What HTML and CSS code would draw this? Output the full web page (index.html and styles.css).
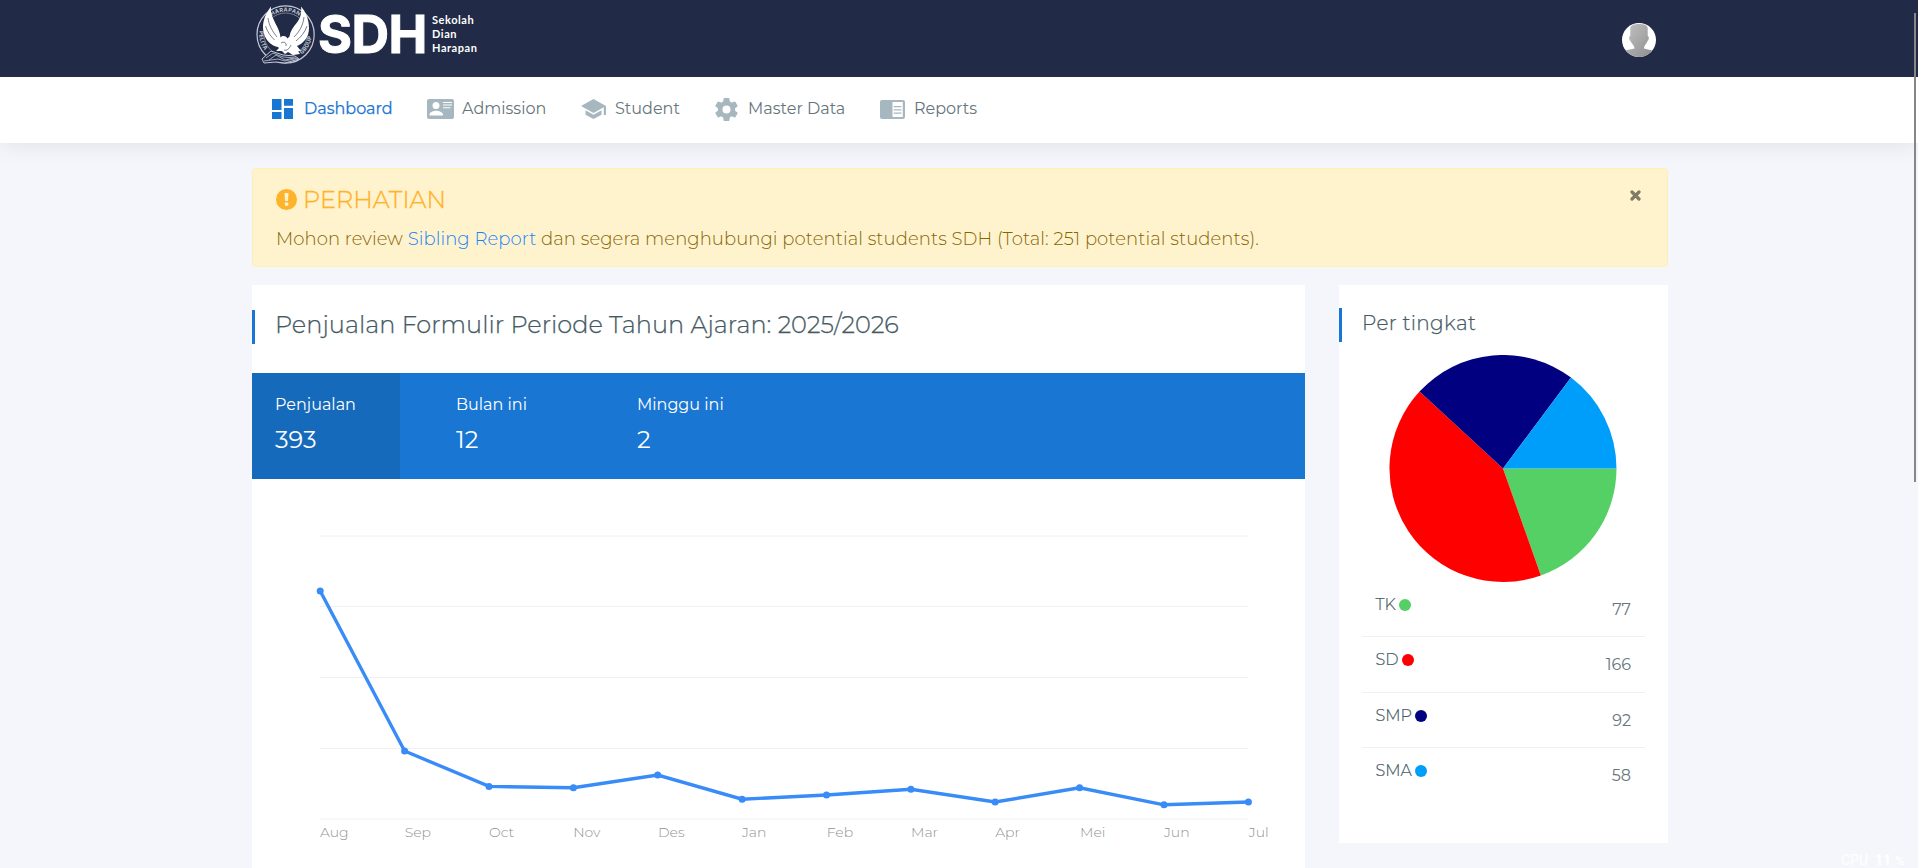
FILE: index.html
```html
<!DOCTYPE html>
<html lang="id">
<head>
<meta charset="utf-8">
<title>SDH Dashboard</title>
<link rel="stylesheet" href="styles.css">
</head>
<body>
<header class="topbar">
  <div class="container topbar-inner">
    <div class="logo">
      <svg class="emblem" width="60" height="62" viewBox="0 0 60 62">
        <circle cx="29.600" cy="30.500" r="28.600" fill="none" stroke="#c6cad6" stroke-width="1.200"/>
        <circle cx="29.600" cy="30.500" r="21.500" fill="none" stroke="#8d94a8" stroke-width=".8"/>
        <path id="arcTop" d="M6.600 30.500a23 23 0 0 1 46 0" fill="none"/>
        <path id="arcLeft" d="M3.500 27a26 26 0 0 0 15 27" fill="none"/>
        <path id="arcRight" d="M46 50.500a26 26 0 0 0 9-25" fill="none"/>
        <text class="ring-text"><textPath href="#arcTop" startOffset="50%" text-anchor="middle">HARAPAN</textPath></text>
        <text class="ring-text"><textPath href="#arcLeft">PELITA</textPath></text>
        <text class="ring-text"><textPath href="#arcRight">GROUP</textPath></text>
        <path fill="#fff" d="M15 2.500C10 9 7 16 7 23c0 8 4 14 8 17 3 2.500 7 2.500 8 4l-3 3h6l3 3 3-2 5 3 7-1-2-3 3 0-4-5c7-3 12-9 12-18 0-8-3-16-8-21.500 1 7-1 12-4 16-4 5-7 9-7.500 14l-2 2c-2-3-5-3-7-1-.5-5-2-8-4-12C18 16 14 10 15 2.500Z"/>
        <path fill="none" stroke="#212a47" stroke-width=".6" d="M12 14c1 8 5 14 9 19M9.500 22c2 6 5 10 9 14M48 13c-1 9-5 15-10 20M51 22c-2 6-6 11-11 15M25 39c3-2 6 0 5 3M28 46c3 1 5-1 7-5"/>
        <path fill="#212a47" stroke="#c6cad6" stroke-width="1" d="M6 55l9-8 12 4 12 1 4 3-14 4-9-1-12 1Z"/>
        <path fill="none" stroke="#aeb4c4" stroke-width=".9" d="M10 54l7-5 10 4 13 1M13 56l7-5 9 5 9-2M8 57l14-2 7 2 13-3"/>
      </svg>
      <span class="logo-name">SDH</span>
      <span class="logo-sub">Sekolah<br>Dian<br>Harapan</span>
    </div>
    <svg class="avatar" width="34" height="34" viewBox="0 0 34 34">
      <defs>
        <clipPath id="round"><circle cx="17" cy="17" r="17"/></clipPath>
        <linearGradient id="grey" x1="0" y1="0" x2="1" y2="1"><stop offset="0" stop-color="#c2c2c2"/><stop offset="1" stop-color="#8e8e8e"/></linearGradient>
      </defs>
      <g clip-path="url(#round)">
        <rect width="34" height="34" fill="#fff"/>
        <path fill="url(#grey)" d="M8.300 5C9 1.500 13 1 17 1s8 .5 8.700 4v8c1.500 0 1.500 4-.2 5-.8 3-3.500 4-3.500 7.500l8 2V35H3v-7.500l9.500-2c0-3-3-5-4-7.500-1.800-1-1.700-5-.2-5Z"/>
      </g>
    </svg>
  </div>
</header>

<nav class="nav">
  <div class="container nav-inner">
    <a class="nav-item active w-dashboard"><svg width="21" height="20" viewBox="0 0 21 20"><path d="M0 0h9.500v11H0zM0 13h9.500v7H0zM12 0h9v6.700h-9zM12 9h9v11h-9z"/></svg><span>Dashboard</span></a>
    <a class="nav-item w-admission"><svg width="27" height="20" viewBox="0 0 27 20"><path fill-rule="evenodd" d="M2 0h23a2 2 0 0 1 2 2v16a2 2 0 0 1-2 2H2a2 2 0 0 1-2-2V2a2 2 0 0 1 2-2Zm7 3a3.500 3.500 0 1 0 0 7 3.500 3.500 0 0 0 0-7ZM2.500 16.500h13.500v-1c0-2.500-4.500-3.800-6.800-3.800s-6.700 1.300-6.700 3.800ZM16 3v1h9V3Zm0 2.600v1h9v-1Zm0 2.600v1h7.500v-1Z"/></svg><span>Admission</span></a>
    <a class="nav-item w-student"><svg width="25" height="20" viewBox="0 0 25 20"><path d="M12.500 0 0 7l12.500 7 10.300-5.700V16H25V7ZM4.500 11.300v4.400l8 4.300 8-4.300v-4.400l-8 4.500Z"/></svg><span>Student</span></a>
    <a class="nav-item w-master"><svg width="23" height="23" viewBox="2.200 2 19.600 20"><path d="M19.430 12.980c.04-.32.070-.64.070-.98s-.03-.66-.07-.98l2.110-1.650c.19-.15.240-.42.120-.64l-2-3.460c-.12-.22-.39-.3-.61-.22l-2.490 1c-.52-.4-1.080-.73-1.690-.98l-.38-2.650C14.460 2.180 14.250 2 14 2h-4c-.25 0-.46.180-.49.420l-.38 2.650c-.61.250-1.170.590-1.690.98l-2.490-1c-.23-.09-.49 0-.61.220l-2 3.460c-.13.220-.07.490.120.640l2.110 1.650c-.04.320-.07.650-.07.980s.03.660.070.980l-2.110 1.650c-.19.150-.24.420-.12.640l2 3.460c.12.220.390.300.610.220l2.490-1c.52.400 1.080.730 1.690.980l.38 2.650c.03.240.240.420.490.420h4c.25 0 .46-.18.490-.42l.38-2.650c.61-.25 1.170-.59 1.690-.98l2.490 1c.23.090.490 0 .61-.22l2-3.460c.12-.22.070-.49-.12-.64ZM12 15.500a3.500 3.500 0 1 1 0-7 3.500 3.500 0 0 1 0 7Z"/></svg><span>Master Data</span></a>
    <a class="nav-item w-reports"><svg class="drop" width="25" height="19" viewBox="0 0 25 19"><path fill-rule="evenodd" d="M2 0h21a2 2 0 0 1 2 2v15a2 2 0 0 1-2 2H2a2 2 0 0 1-2-2V2a2 2 0 0 1 2-2Zm10.500 2v15h10.300V2Z"/><path d="M13.700 6h7.700v1.300h-7.700zM13.700 9.200h7.700v1.300h-7.700zM13.700 12.400h7.700v1.300h-7.700z"/></svg><span>Reports</span></a>
  </div>
</nav>

<main class="container">
  <section class="alert">
    <div class="alert-body">
      <h4 class="alert-title"><svg width="21" height="21" viewBox="0 0 21 21"><circle cx="10.500" cy="10.500" r="10.500" fill="#ffb22b"/><path fill="#fff3cd" d="M8.500 4h4l-.5 8H9zM8.900 13.600h3.400v3.100H8.900z"/></svg><span>PERHATIAN</span></h4>
      <p class="alert-text">Mohon review <a class="link">Sibling Report</a> dan segera menghubungi potential students SDH (Total: 251 potential students).</p>
    </div>
    <svg class="close" width="11" height="11" viewBox="0 0 11 11"><path d="M2 2l7 7M9 2L2 9" stroke="#827a65" stroke-width="3.200" stroke-linecap="round"/></svg>
  </section>

  <div class="cards">
    <section class="card sales">
      <h3 class="card-title sales-title"><span>Penjualan Formulir Periode Tahun Ajaran: 2025/2026</span></h3>
      <div class="stats">
        <div class="stat current"><span class="stat-label">Penjualan</span><span class="stat-value">393</span></div>
        <div class="stat"><span class="stat-label">Bulan ini</span><span class="stat-value">12</span></div>
        <div class="stat"><span class="stat-label">Minggu ini</span><span class="stat-value">2</span></div>
      </div>
      <svg class="chart" width="1053" height="389" viewBox="252 479 1053 389">
        <g class="grid">
          <path d="M320 536h928.500M320 606.500h928.500M320 677.500h928.500M320 748.500h928.500M320 819h928.500"/>
        </g>
        <polyline class="series" points="320.2,591 404.6,751 489,786.400 573.400,787.800 657.700,775 742.100,799.200 826.500,795 910.900,789.300 995.200,802 1079.600,787.800 1164,804.800 1248.400,802"/>
        <g class="dots">
          <circle cx="320.200" cy="591" r="3.500"/><circle cx="404.600" cy="751" r="3.500"/><circle cx="489" cy="786.400" r="3.500"/><circle cx="573.400" cy="787.800" r="3.500"/><circle cx="657.700" cy="775" r="3.500"/><circle cx="742.100" cy="799.200" r="3.500"/><circle cx="826.500" cy="795" r="3.500"/><circle cx="910.900" cy="789.300" r="3.500"/><circle cx="995.200" cy="802" r="3.500"/><circle cx="1079.600" cy="787.800" r="3.500"/><circle cx="1164" cy="804.800" r="3.500"/><circle cx="1248.400" cy="802" r="3.500"/>
        </g>
        <g class="months">
          <text x="320" y="837">Aug</text><text x="404.700" y="837">Sep</text><text x="489" y="837">Oct</text><text x="573.200" y="837">Nov</text><text x="658" y="837">Des</text><text x="742" y="837">Jan</text><text x="826.800" y="837">Feb</text><text x="911" y="837">Mar</text><text x="995.200" y="837">Apr</text><text x="1080" y="837">Mei</text><text x="1164" y="837">Jun</text><text x="1248.800" y="837">Jul</text>
        </g>
      </svg>
    </section>

    <section class="card levels">
      <h4 class="card-title levels-title"><span>Per tingkat</span></h4>
      <svg class="pie" width="228" height="228" viewBox="-114 -113.500 228 228">
        <path fill="#55d064" d="M0 0L113.500 0A113.500 113.500 0 0 1 37.850 107Z"/>
        <path fill="#f00" d="M0 0L37.850 107A113.500 113.500 0 0 1 -83.500 -76.900Z"/>
        <path fill="#000080" d="M0 0L-83.500 -76.900A113.500 113.500 0 0 1 68 -90.900Z"/>
        <path fill="#009efb" d="M0 0L68 -90.900A113.500 113.500 0 0 1 113.500 0Z"/>
      </svg>
      <ul class="level-list">
        <li><span class="level-name">TK<i class="dot green"></i></span><span class="level-count">77</span></li>
        <li><span class="level-name">SD<i class="dot red"></i></span><span class="level-count">166</span></li>
        <li><span class="level-name">SMP<i class="dot navy"></i></span><span class="level-count">92</span></li>
        <li><span class="level-name">SMA<i class="dot blue"></i></span><span class="level-count">58</span></li>
      </ul>
    </section>
  </div>
</main>
<div class="scroll-thumb"></div>
<div class="cpu"><span>CPU</span><b>11</b><b class="pct">%</b></div>
</body>
</html>
```
FILE: styles.css
```css
* { box-sizing: border-box; }
html, body { height: 868px; overflow: hidden; }
body {
  margin: 0;
  background: #f4f6fb;
  font-family: Montserrat, Inter, "Open Sans", sans-serif;
  font-weight: 300;
  font-size: 16px;
  color: #67757c;
}
.container { width: 1416px; margin: 0 auto; position: relative; left: 1px; }
h3, h4, p, ul { margin: 0; padding: 0; font-weight: 300; }

.topbar { height: 77px; background: #212a47; }
.topbar-inner { display: flex; justify-content: space-between; align-items: flex-start; }
.logo { display: flex; align-items: flex-start; padding: 4px 0 0 4px; color: #fff; }
.emblem { flex: none; }
.ring-text { font: 700 5.500px Inter, sans-serif; fill: #c6cad6; letter-spacing: .3px; }
.logo-name { font-family: Inter, sans-serif; font-weight: 700; font-size: 52px; line-height: 62px; margin-left: 2px; width: 114px; letter-spacing: -.5px; -webkit-text-stroke: 1px #fff; }
.logo-sub { font-family: Lato, sans-serif; font-weight: 700; font-size: 11px; line-height: 14px; letter-spacing: .55px; margin: 9px 0 0 0; }
.avatar { margin: 23px 12px 0 0; }

.nav { height: 66px; background: #fff; box-shadow: 0 0 24px rgba(0, 0, 0, .1); clip-path: inset(0 0 -40px 0); }
.nav-inner { display: flex; padding: 20px 0 0 20px; }
.nav-item { display: flex; align-items: center; height: 24px; line-height: 22px; font-weight: 400; }
.nav-item span { margin-top: -1px; }
.nav-item svg { fill: #a6b7bf; flex: none; }
.nav-item.active { color: #1976d2; -webkit-text-stroke: .25px #1976d2; }
.nav-item.active svg { fill: #1976d2; }
.nav-item .drop { margin-top: 1px; }
.w-dashboard { width: 155px; gap: 11px; }
.w-admission { width: 154px; gap: 8px; }
.w-student { width: 134px; gap: 9px; }
.w-master { width: 165px; gap: 10px; }
.w-reports { gap: 9px; }

.alert {
  display: flex;
  justify-content: space-between;
  height: 99px;
  margin: 25px 0 18px;
  padding: 18px 26px 0 23px;
  background: #fff3cd;
  border: 1px solid #ffeeba;
  border-radius: 4px;
  color: #856404;
}
.alert-title { display: flex; align-items: center; gap: 6px; height: 25px; font-size: 24px; line-height: 25px; color: #ffb22b; -webkit-text-stroke: .35px #ffb22b; }
.alert-text { font-size: 18px; line-height: 26px; margin-top: 14px; white-space: nowrap; letter-spacing: .07px; }
.link { color: #1682fb; }
.close { margin-top: 3px; }

.cards { display: flex; justify-content: space-between; align-items: flex-start; }
.card { background: #fff; }
.sales { width: 1053px; height: 600px; }
.levels { width: 329px; height: 558px; display: flex; flex-direction: column; }
.card-title { border-left: 3px solid #1976d2; height: 34px; color: #455a64; white-space: nowrap; }
.sales-title { margin: 25px 0 29px; padding-left: 20px; font-size: 24px; line-height: 29px; letter-spacing: .03px; -webkit-text-stroke: .25px #455a64; }
.levels-title { margin-top: 23px; padding-left: 20px; font-size: 20px; line-height: 30px; letter-spacing: .35px; -webkit-text-stroke: .25px #455a64; }

.stats { display: flex; height: 106px; background: #1976d2; color: #fff; gap: 33px; }
.stat { width: 148px; padding: 20px 23px 0; display: flex; flex-direction: column; white-space: nowrap; font-weight: 400; }
.stat.current { background: #166abb; }
.stat-label { line-height: 24px; }
.stat-value { font-size: 24px; line-height: 46px; }

.chart { display: block; }
.grid path { fill: none; stroke: #f0f0f0; stroke-width: 1; }
.series { fill: none; stroke: #398bf7; stroke-width: 3.400; }
.dots { fill: #398bf7; }
.months { font-size: 14px; fill: #929292; }

.pie { align-self: center; margin: 13px 1px 0 0; }
.level-list { list-style: none; margin: -1px 23px 0; }
.level-list li { height: 55.500px; border-bottom: 1px solid #eff0f2; padding: 12px 14px 0 13.500px; display: flex; justify-content: space-between; line-height: 22px; }
.level-list li:first-child { height: 55px; }
.level-list li:last-child { border: 0; }
.level-name { display: flex; align-items: center; height: 22px; color: #455a64; -webkit-text-stroke: .2px #455a64; }
.level-count { margin-top: 5px; font-weight: 400; }
.dot { width: 12px; height: 12px; border-radius: 50%; margin-left: 3.500px; }
.green { background: #55d064; }
.red { background: #f00; }
.navy { background: #000080; }
.blue { background: #009efb; }

.scroll-thumb { position: absolute; left: 1914px; top: 13px; width: 2px; height: 469px; background: #868686; }
.cpu { position: absolute; left: 1841px; top: 853px; display: flex; align-items: baseline; color: #fff; font: 400 14px/15px Roboto, sans-serif; }
.cpu b { margin-left: 7px; font-weight: 700; }
.cpu .pct { margin-left: 4px; font-size: 13px; }
```
